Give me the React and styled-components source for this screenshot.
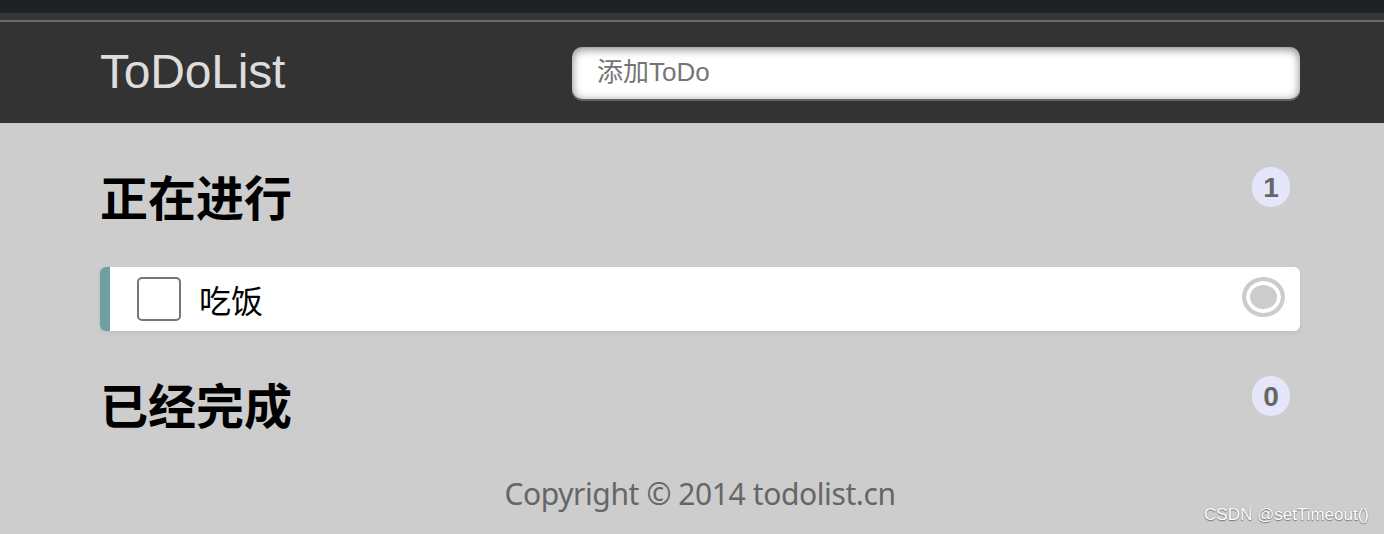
import styled, { createGlobalStyle } from 'styled-components';

const GlobalStyle = createGlobalStyle`
  html, body {
    margin: 0;
    padding: 0;
    background: #cdcdcd;
    font-family: "Liberation Sans", "Noto Sans CJK SC", sans-serif;
  }
`;

const Page = styled.div`
  position: relative;
  min-height: 534px;
  background: #cdcdcd;
`;

const BrowserBar = styled.div`
  height: 13px;
  background: #202124;
  border-bottom: 7px solid #35363a;
`;

const Header = styled.header`
  height: 101px;
  background: #333;
  border-top: 2px solid #6b6b6f;
`;

const Inner = styled.div`
  width: 1200px;
  margin-left: 100px;
  display: flex;
  align-items: center;
  justify-content: space-between;
  height: 100%;
`;

const Logo = styled.h1`
  margin: -3px 0 0;
  color: #ddd;
  font-family: "Liberation Sans", Arial, sans-serif;
  font-weight: normal;
  font-size: 48px;
  letter-spacing: -0.2px;
`;

const AddInput = styled.input`
  width: 728px;
  height: 52px;
  box-sizing: border-box;
  border: none;
  border-radius: 10px;
  padding: 0 0 0 25px;
  font-size: 26px;
  font-family: "Liberation Sans", "Noto Sans CJK SC", sans-serif;
  background: #fff;
  box-shadow: 0 2px 0 rgba(255, 255, 255, 0.24), 0 2px 10px rgba(0, 0, 0, 0.5) inset;
  outline: none;
  &::placeholder {
    color: #757575;
  }
`;

const Section = styled.section`
  width: 1200px;
  margin-left: 100px;
`;

const SectionTitle = styled.h2`
  position: relative;
  margin: 0;
  height: ${(p) => p.$height}px;
  padding-top: ${(p) => p.$top}px;
  font-size: 48px;
  line-height: 52px;
  font-weight: bold;
  color: #000;
  font-family: "Noto Sans CJK SC", sans-serif;
`;

const Count = styled.span`
  position: absolute;
  top: ${(p) => p.$top}px;
  right: 10px;
  min-width: 18px;
  height: 40px;
  padding: 0 10px;
  border-radius: 20px;
  background: #e6e6fa;
  color: #666;
  font-size: 28px;
  line-height: 42px;
  text-align: center;
  font-family: "Liberation Sans", sans-serif;
`;

const List = styled.ol`
  list-style: none;
  margin: 0;
  padding: 0;
`;

const Item = styled.li`
  display: flex;
  align-items: center;
  height: 64px;
  background: #fff;
  border-left: 10px solid #6f9fa0;
  border-radius: 6px;
  box-shadow: 0 2px 4px rgba(0, 0, 0, 0.07);
  padding: 0 15px 0 27px;
`;

const Check = styled.span`
  width: 44px;
  height: 44px;
  box-sizing: border-box;
  border: 2px solid #767676;
  border-radius: 5px;
  background: #fff;
`;

const ItemText = styled.p`
  flex: 1;
  margin: 0 0 0 18px;
  font-size: 32px;
  color: #000;
  font-family: "Noto Sans CJK SC", sans-serif;
  font-weight: 400;
`;

const Remove = styled.a`
  width: 35px;
  height: 32px;
  border: 4px solid #ccc;
  border-radius: 50%;
  background: #ccc;
  box-shadow: inset 0 0 0 4px #fff;
  margin-top: -4px;
`;

const Footer = styled.footer`
  text-align: center;
  color: #666;
  font-size: 30px;
  font-family: "Noto Sans", sans-serif;
  padding-top: 18px;
  letter-spacing: -0.4px;
  margin-left: 16px;
`;

const Watermark = styled.div`
  position: absolute;
  right: 15px;
  bottom: 9px;
  font-size: 17px;
  color: #fff;
  text-shadow: 0 1px 1px #777, 0 0 1px #888;
  font-family: "Liberation Sans", sans-serif;
`;

export default function App() {
  return (
    <Page>
      <GlobalStyle />
      <BrowserBar />
      <Header>
        <Inner>
          <Logo>ToDoList</Logo>
          <AddInput type="text" placeholder="添加ToDo" />
        </Inner>
      </Header>
      <Section>
        <SectionTitle $top={46} $height={98}>
          正在进行
          <Count $top={44}>1</Count>
        </SectionTitle>
        <List>
          <Item>
            <Check />
            <ItemText>吃饭</ItemText>
            <Remove />
          </Item>
        </List>
        <SectionTitle $top={46} $height={78}>
          已经完成
          <Count $top={45}>0</Count>
        </SectionTitle>
        <List />
      </Section>
      <Footer>Copyright © 2014 todolist.cn</Footer>
      <Watermark>CSDN @setTimeout()</Watermark>
    </Page>
  );
}
